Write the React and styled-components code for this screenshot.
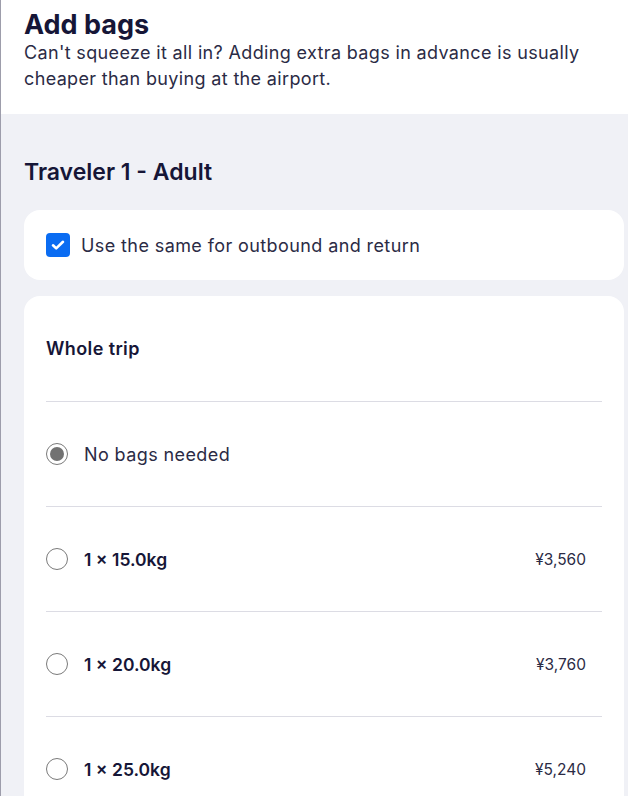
import React from "react";
import styled, { createGlobalStyle } from "styled-components";

const GlobalStyle = createGlobalStyle`
  body {
    margin: 0;
    font-family: Inter, "Noto Sans", sans-serif;
    color: #161637;
    background: #f0f1f6;
  }
`;

const Page = styled.div`
  min-height: 796px;
  border-left: 1px solid #9d9dab;
  background: #f0f1f6;
  overflow: hidden;
`;

const Header = styled.div`
  background: #fff;
  padding: 10px 23px 22px;
`;

const Title = styled.h1`
  margin: 0;
  font-size: 27px;
  font-weight: 700;
  line-height: 30px;
`;

const Subtitle = styled.p`
  margin: 0;
  max-width: 560px;
  font-size: 18px;
  letter-spacing: 0.35px;
  line-height: 26px;
  color: #2b2b45;
`;

const Body = styled.div`
  padding: 44px 4px 0 23px;
  display: flex;
  flex-direction: column;
`;

const Traveler = styled.h2`
  margin: 0 0 24px;
  font-size: 23px;
  font-weight: 600;
  line-height: 28px;
`;

const Card = styled.div`
  background: #fff;
  border-radius: 16px;
  padding: 0 22px;
  margin-bottom: 16px;
`;

const CheckRow = styled.label`
  height: 70px;
  display: flex;
  align-items: center;
  gap: 11px;
  font-size: 18px;
  letter-spacing: 0.4px;
  color: #2b2b45;
`;

const Box = styled.span`
  width: 24px;
  height: 24px;
  border-radius: 4px;
  background: #0a6cf2;
  display: flex;
  align-items: center;
  justify-content: center;
`;

const Section = styled.div`
  height: 105px;
  display: flex;
  align-items: center;
  font-size: 18px;
  letter-spacing: 0.4px;
  font-weight: 600;
  border-bottom: 1px solid #dcdce4;
`;

const Option = styled.div`
  height: 104px;
  display: flex;
  align-items: center;
  border-bottom: ${(p) => (p.$last ? "none" : "1px solid #dcdce4")};
`;

const Radio = styled.span`
  width: 20px;
  height: 20px;
  border-radius: 50%;
  border: 1.5px solid #7a7a7a;
  display: flex;
  align-items: center;
  justify-content: center;
  flex-shrink: 0;
  &::after {
    content: "";
    display: ${(p) => (p.$checked ? "block" : "none")};
    width: 14px;
    height: 14px;
    border-radius: 50%;
    background: #727272;
  }
`;

const Label = styled.span`
  margin-left: 16px;
  font-size: ${(p) => (p.$bold ? "17.5px" : "18px")};
  letter-spacing: ${(p) => (p.$bold ? "0" : "0.4px")};
  font-weight: ${(p) => (p.$bold ? 600 : 400)};
  color: ${(p) => (p.$bold ? "#161637" : "#2b2b45")};
  flex: 1;
`;

const Price = styled.span`
  font-size: 15.5px;
  color: #2b2b45;
  margin-right: 16px;
`;

const options = [
  { label: "1 × 15.0kg", price: "¥3,560" },
  { label: "1 × 20.0kg", price: "¥3,760" },
  { label: "1 × 25.0kg", price: "¥5,240" },
];

export default function App() {
  return (
    <Page>
      <GlobalStyle />
      <Header>
        <Title>Add bags</Title>
        <Subtitle>
          Can't squeeze it all in? Adding extra bags in advance is usually
          cheaper than buying at the airport.
        </Subtitle>
      </Header>
      <Body>
        <Traveler>Traveler 1 - Adult</Traveler>
        <Card>
          <CheckRow>
            <Box>
              <svg width="16" height="16" viewBox="0 0 16 16">
                <path
                  d="M3 8.3l3.2 3.1L13 4.8"
                  fill="none"
                  stroke="#fff"
                  strokeWidth="2.6"
                  strokeLinecap="round"
                  strokeLinejoin="round"
                />
              </svg>
            </Box>
            Use the same for outbound and return
          </CheckRow>
        </Card>
        <Card>
          <Section>Whole trip</Section>
          <Option>
            <Radio $checked />
            <Label>No bags needed</Label>
          </Option>
          {options.map((o, i) => (
            <Option key={o.label} $last={i === options.length - 1}>
              <Radio />
              <Label $bold>{o.label}</Label>
              <Price>{o.price}</Price>
            </Option>
          ))}
        </Card>
      </Body>
    </Page>
  );
}
